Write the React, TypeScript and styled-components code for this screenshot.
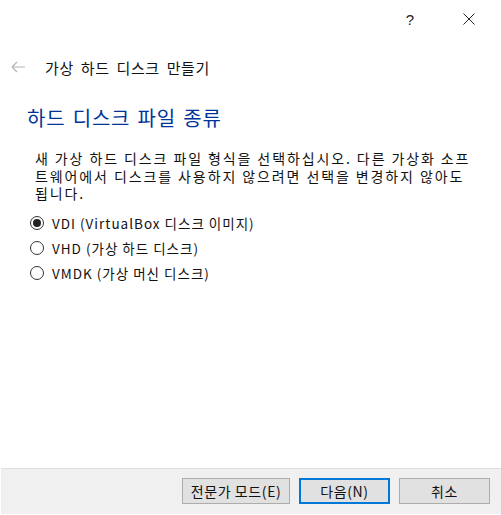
import React, { useState } from "react";
import styled, { createGlobalStyle } from "styled-components";

const Global = createGlobalStyle`
  html, body { margin: 0; padding: 0; background: #ffffff; }
  body { font-family: "Noto Sans CJK KR", "Noto Sans", sans-serif; color: #000; }
  * { box-sizing: border-box; }
`;

const Window = styled.div`
  width: 501px;
  height: 515px;
  display: flex;
  flex-direction: column;
  background: #ffffff;
  overflow: hidden;
`;

const TitleBar = styled.div`
  height: 38px;
  display: flex;
  justify-content: flex-end;
  align-items: center;
  padding-right: 9px;
  gap: 13px;
`;

const CaptionButton = styled.div`
  width: 46px;
  height: 38px;
  display: flex;
  align-items: center;
  justify-content: center;
  font-family: "Segoe UI", "Liberation Sans", sans-serif;
  font-size: 15px;
  color: #222;
`;

const NavRow = styled.div`
  display: flex;
  align-items: center;
  height: 30px;
  margin-top: 14px;
  padding-left: 11px;
  gap: 19px;
`;

const NavTitle = styled.div`
  font-size: 15px;
  color: #111;
  letter-spacing: 0.6px;
  word-spacing: 3px;
`;

const Content = styled.div`
  flex: 1;
  display: flex;
  flex-direction: column;
  padding-left: 27px;
  padding-right: 10px;
`;

const Heading = styled.h1`
  margin: 22px 0 0 0;
  font-size: 20px;
  font-weight: 400;
  color: #003399;
  line-height: 28px;
  letter-spacing: 0.8px;
  word-spacing: 2px;
`;

const Description = styled.p`
  margin: 18px 0 0 8px;
  font-size: 14px;
  line-height: 17.5px;
  letter-spacing: 1.9px;
  white-space: nowrap;
  color: #111;
`;

const RadioList = styled.div`
  display: flex;
  flex-direction: column;
  margin-top: 8px;
  margin-left: 3px;
`;

const RadioRow = styled.label`
  display: flex;
  align-items: center;
  height: 25px;
  gap: 8px;
  font-size: 13.5px;
  letter-spacing: 1px;
  color: #111;
  cursor: default;
`;

const RadioCircle = styled.span<{ $checked: boolean }>`
  width: 14px;
  height: 14px;
  border-radius: 50%;
  border: 1px solid #333;
  background: #fff;
  display: flex;
  align-items: center;
  justify-content: center;
  flex-shrink: 0;
  &::after {
    content: "";
    width: 8px;
    height: 8px;
    border-radius: 50%;
    background: ${(p) => (p.$checked ? "#222" : "transparent")};
  }
`;

const Footer = styled.div`
  height: 46px;
  margin-bottom: 1px;
  margin-left: 1px;
  background: #f0f0f0;
  border-top: 1px solid #dfdfdf;
  display: flex;
  justify-content: flex-end;
  align-items: flex-start;
  padding-top: 9px;
  padding-right: 11px;
  gap: 9px;
`;

const Button = styled.button<{ $default?: boolean; $w: number }>`
  width: ${(p) => p.$w}px;
  height: 26px;
  background: #e1e1e1;
  border: ${(p) => (p.$default ? "2px solid #0078d7" : "1px solid #adadad")};
  font-family: "Noto Sans CJK KR", "Noto Sans", sans-serif;
  font-size: 14px;
  letter-spacing: 0.6px;
  color: #111;
  padding: 0;
  display: flex;
  align-items: center;
  justify-content: center;
`;

const options = [
  "VDI (VirtualBox 디스크 이미지)",
  "VHD (가상 하드 디스크)",
  "VMDK (가상 머신 디스크)",
];

export default function App() {
  const [sel, setSel] = useState(0);
  return (
    <Window>
      <Global />
      <TitleBar>
        <CaptionButton>?</CaptionButton>
        <CaptionButton>
          <svg width="12" height="12" viewBox="0 0 12 12">
            <path d="M0.5 0.5 L11.5 11.5 M11.5 0.5 L0.5 11.5" stroke="#222" strokeWidth="1" fill="none" />
          </svg>
        </CaptionButton>
      </TitleBar>
      <NavRow>
        <svg width="15" height="12" viewBox="0 0 15 12">
          <path d="M1 6 H14 M1 6 L6 1 M1 6 L6 11" stroke="#b4b4b4" strokeWidth="1.2" fill="none" />
        </svg>
        <NavTitle>가상 하드 디스크 만들기</NavTitle>
      </NavRow>
      <Content>
        <Heading>하드 디스크 파일 종류</Heading>
        <Description>
          새 가상 하드 디스크 파일 형식을 선택하십시오. 다른 가상화 소프
          <br />
          트웨어에서 디스크를 사용하지 않으려면 선택을 변경하지 않아도
          <br />
          됩니다.
        </Description>
        <RadioList>
          {options.map((o, i) => (
            <RadioRow key={o} onClick={() => setSel(i)}>
              <RadioCircle $checked={sel === i} />
              {o}
            </RadioRow>
          ))}
        </RadioList>
      </Content>
      <Footer>
        <Button $w={108}>전문가 모드(E)</Button>
        <Button $w={91} $default>다음(N)</Button>
        <Button $w={91}>취소</Button>
      </Footer>
    </Window>
  );
}
